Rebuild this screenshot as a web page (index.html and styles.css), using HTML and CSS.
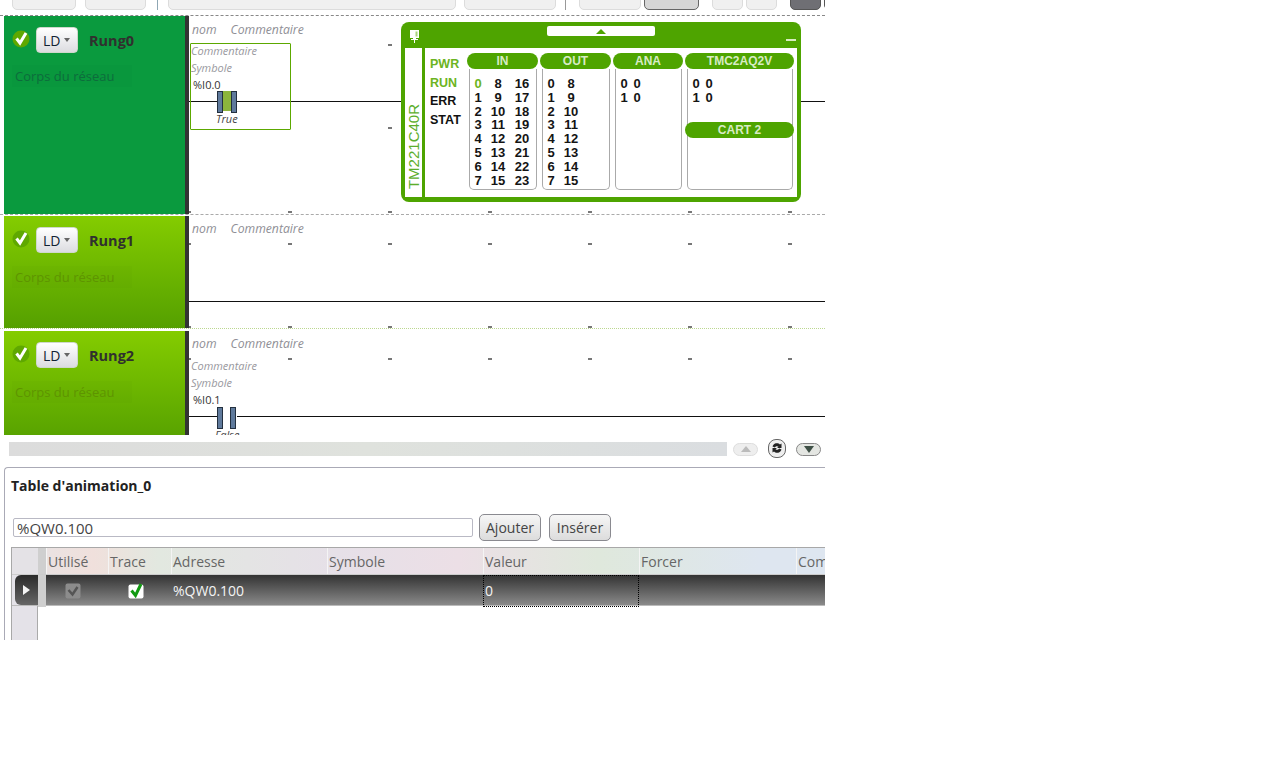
FILE: index.html
```html
<!DOCTYPE html>
<html lang="fr">
<head>
<meta charset="utf-8">
<title>Table d'animation</title>
<link rel="stylesheet" href="styles.css">
</head>
<body>
<div class="app">
  <div class="toolbar">
    <span class="tb tb1"></span><span class="tb tb2"></span><span class="tb-sep"></span><span class="tb tb3"></span><span class="tb tb4"></span><span class="tb-sep sep2"></span><span class="tb tb5"></span><span class="tb tb6"></span><span class="tb tb7"></span><span class="tb tb8"></span><span class="tb tb9"></span><span class="tb tb10"></span>
  </div>

  <div class="rungs">
    <section class="rung rung-active">
      <div class="rung-head">
        <div class="rung-title">
          <svg class="ok" viewBox="0 0 18 18"><circle cx="9" cy="9" r="8.5" fill="#5fa800"/><path d="M4.5 8.5l3.5 4.5 6-10" fill="none" stroke="#fff" stroke-width="3"/></svg>
          <span class="ld">LD<i class="caret"></i></span>
          <b class="name">Rung0</b>
        </div>
        <div class="body-label">Corps du réseau</div>
      </div>
      <div class="diagram">
        <div class="cols"><i>nom</i><i>Commentaire</i></div>
        <span class="wire wire0"></span>
        <span class="tick t-b0 x0"></span><span class="tick t-b0 x1"></span><span class="tick t-b0 x2"></span><span class="tick t-b0 x3"></span><span class="tick t-b0 x4"></span><span class="tick t-b0 x5"></span><span class="tick t-b0 x6"></span>
        <span class="tick t-t0 x2"></span><span class="tick t-m0 x2"></span>
        <div class="contact-box selected">
          <em>Commentaire</em><em>Symbole</em><span class="addr">%I0.0</span>
          <div class="contact on"><span></span></div>
          <em class="state">True</em>
        </div>

        <div class="module">
          <div class="mod-top">
            <svg class="pin" viewBox="0 0 12 14"><path d="M2 1h9v8H8v1h2v1H7v3H6v-3H3v-1h2V9H2z" fill="#fff"/><path d="M7.500 2.500H9.500V7.500H7.500z" fill="#a8d47c"/></svg>
            <span class="mod-pill"><i></i></span>
            <span class="mod-min"></span>
          </div>
          <div class="mod-main">
            <div class="mod-name"><span>TM221C40R</span></div>
            <div class="mod-panel">
              <div class="leds"><b class="lit">PWR</b><b class="lit">RUN</b><b>ERR</b><b>STAT</b></div>
              <div class="io">
                <h4>IN</h4>
                <div class="card">
                  <div class="nums n3">
                    <span class="lit">0</span><span>8</span><span>16</span>
                    <span>1</span><span>9</span><span>17</span>
                    <span>2</span><span>10</span><span>18</span>
                    <span>3</span><span>11</span><span>19</span>
                    <span>4</span><span>12</span><span>20</span>
                    <span>5</span><span>13</span><span>21</span>
                    <span>6</span><span>14</span><span>22</span>
                    <span>7</span><span>15</span><span>23</span>
                  </div>
                </div>
              </div>
              <div class="io">
                <h4>OUT</h4>
                <div class="card">
                  <div class="nums n2">
                    <span>0</span><span>8</span>
                    <span>1</span><span>9</span>
                    <span>2</span><span>10</span>
                    <span>3</span><span>11</span>
                    <span>4</span><span>12</span>
                    <span>5</span><span>13</span>
                    <span>6</span><span>14</span>
                    <span>7</span><span>15</span>
                  </div>
                </div>
              </div>
              <div class="io">
                <h4>ANA</h4>
                <div class="card">
                  <div class="nums pair"><span>0</span><span>0</span><span>1</span><span>0</span></div>
                </div>
              </div>
              <div class="io">
                <h4>TMC2AQ2V</h4>
                <div class="card">
                  <div class="nums pair"><span>0</span><span>0</span><span>1</span><span>0</span></div>
                  <h4 class="cart">CART 2</h4>
                </div>
              </div>
            </div>
          </div>
        </div>
      </div>
    </section>

    <section class="rung rung-1">
      <div class="rung-head">
        <div class="rung-title">
          <svg class="ok" viewBox="0 0 18 18"><circle cx="9" cy="9" r="8.5" fill="#5fa800"/><path d="M4.5 8.5l3.5 4.5 6-10" fill="none" stroke="#fff" stroke-width="3"/></svg>
          <span class="ld">LD<i class="caret"></i></span>
          <b class="name">Rung1</b>
        </div>
        <div class="body-label">Corps du réseau</div>
      </div>
      <div class="diagram">
        <div class="cols"><i>nom</i><i>Commentaire</i></div>
        <span class="wire wire1"></span>
        <span class="tick t-t x0"></span><span class="tick t-t x1"></span><span class="tick t-t x2"></span><span class="tick t-t x3"></span><span class="tick t-t x4"></span><span class="tick t-t x5"></span><span class="tick t-t x6"></span>
        <span class="tick t-b x0"></span><span class="tick t-b x1"></span><span class="tick t-b x2"></span><span class="tick t-b x3"></span><span class="tick t-b x4"></span><span class="tick t-b x5"></span><span class="tick t-b x6"></span>
      </div>
    </section>

    <section class="rung rung-2">
      <div class="rung-head">
        <div class="rung-title">
          <svg class="ok" viewBox="0 0 18 18"><circle cx="9" cy="9" r="8.5" fill="#5fa800"/><path d="M4.5 8.5l3.5 4.5 6-10" fill="none" stroke="#fff" stroke-width="3"/></svg>
          <span class="ld">LD<i class="caret"></i></span>
          <b class="name">Rung2</b>
        </div>
        <div class="body-label">Corps du réseau</div>
      </div>
      <div class="diagram">
        <div class="cols"><i>nom</i><i>Commentaire</i></div>
        <span class="wire wire1"></span>
        <span class="tick t-t x0"></span><span class="tick t-t x1"></span><span class="tick t-t x2"></span><span class="tick t-t x3"></span><span class="tick t-t x4"></span><span class="tick t-t x5"></span><span class="tick t-t x6"></span>
        <div class="contact-box">
          <em>Commentaire</em><em>Symbole</em><span class="addr">%I0.1</span>
          <div class="contact off"><span></span></div>
          <em class="state">False</em>
        </div>
      </div>
    </section>
  </div>

  <div class="scrollrow">
    <div class="scrolltrack"></div>
    <button class="pill-btn dim"><i class="tri-up"></i></button>
    <button class="gear-btn">
      <svg viewBox="0 0 14 14"><path d="M2.500 5.500a4.500 4.500 0 0 1 7.500-2l1.500-1v4.500H7l1.500-1.300A2.400 2.400 0 0 0 4.800 6.500z" fill="#222"/><path d="M11.500 8.500a4.500 4.500 0 0 1-7.500 2l-1.500 1V7H7L5.500 8.300A2.400 2.400 0 0 0 9.200 7.500z" fill="#222"/></svg>
    </button>
    <button class="pill-btn"><i class="tri-down"></i></button>
  </div>

  <section class="panel">
    <h2>Table d'animation_0</h2>
    <div class="addbar">
      <input class="addr-input" type="text" value="%QW0.100">
      <button class="act">Ajouter</button>
      <button class="act">Insérer</button>
    </div>
    <div class="grid">
      <div class="grid-head">
        <span class="corner"></span><span class="strip"></span>
        <span>Utilisé</span><span>Trace</span><span>Adresse</span><span>Symbole</span><span>Valeur</span><span>Forcer</span><span>Commentaire</span>
      </div>
      <div class="grid-row">
        <span class="row-mark"><i></i></span><span class="strip"></span>
        <span class="cell-c"><svg class="cb" viewBox="0 0 16 16"><rect x=".5" y=".5" width="15" height="15" rx="2" fill="#8c8c8c"/><path d="M3.500 7l4 4.500L12.500 4" fill="none" stroke="#555" stroke-width="2.500"/></svg></span>
        <span class="cell-c"><svg class="cb" viewBox="0 0 16 16"><rect x=".5" y="1.500" width="15" height="14" rx="2" fill="#fff"/><path d="M3.500 7.500l4 5L13 1" fill="none" stroke="#129a12" stroke-width="3"/></svg></span>
        <span>%QW0.100</span><span></span><span class="focus">0</span><span></span><span></span>
      </div>
      <div class="grid-empty"><span class="corner"></span></div>
    </div>
  </section>
</div>
</body>
</html>
```
FILE: styles.css
```css
* { box-sizing: border-box; }
html, body { margin: 0; padding: 0; background: #fff; }
body { font-family: "Open Sans", "Noto Sans", sans-serif; }
.app { width: 825px; height: 640px; overflow: hidden; display: flex; flex-direction: column; }

/* toolbar, cut by the window top */
.toolbar { height: 11px; flex: none; display: flex; align-items: flex-end; padding: 0 0 1px 12px; overflow: hidden; }
.tb { height: 20px; flex: none; border: 1px solid #dcdcdc; border-radius: 5px; background: #f0f0f0; }
.tb1 { width: 64px; }
.tb2 { width: 61px; margin-left: 9px; }
.tb-sep { width: 1px; height: 10px; flex: none; background: #8fa7b4; margin: 0 10px 0 11px; }
.tb3 { width: 288px; }
.tb4 { width: 92px; margin-left: 8px; }
.sep2 { margin: 0 13px 0 9px; background: #999; }
.tb5 { width: 62px; }
.tb6 { width: 55px; margin-left: 3px; background: #d6d6d6; border-color: #666; }
.tb7 { width: 31px; margin-left: 13px; }
.tb8 { width: 31px; margin-left: 3px; }
.tb9 { width: 31px; margin-left: 13px; background: #6f6f74; border-color: #555; }
.tb10 { width: 20px; margin-left: 3px; background: #5c5c60; border-color: #555; }

/* rungs */
.rungs { height: 420px; flex: none; margin-top: 4px; overflow: hidden; display: flex; flex-direction: column; }
.rung { flex: none; display: grid; grid-template-columns: 181px 4px 1fr; padding-left: 4px; }
.rung::before { content: ""; grid-column: 2; grid-row: 1; background: #333; }
.rung-active { height: 200px; margin-bottom: 1px; border-top: 1px dashed #888; border-bottom: 1px dashed #aaa; }
.rung-1 { height: 113px; margin-bottom: 2px; border-bottom: 1px dotted #bcd890; }
.rung-2 { height: 113px; }

.rung-head { grid-column: 1; grid-row: 1; padding: 11px 0 0 7px; background: linear-gradient(#84cc00, #55a000); }
.rung-active .rung-head { background: #0a9a3e; }
.rung-title { display: flex; align-items: center; height: 26px; }
.ok { width: 18px; height: 18px; flex: none; margin: -2px 6px 0 1px; }
.ld { width: 42px; height: 26px; display: flex; align-items: center; padding-left: 6px; border-radius: 4px; background: linear-gradient(#fff, #dcdce0); font-size: 14px; color: #123; border: 1px solid #cfd8cc; }
.caret { width: 0; height: 0; margin-left: 4px; border: 3.500px solid transparent; border-top: 4px solid #666; border-bottom: 0; }
.name { margin-left: 11px; font-size: 14.500px; color: #30302e; }
.body-label { width: 120px; height: 22px; margin-top: 13px; margin-left: 1px; padding-left: 3px; font-size: 13px; line-height: 22px; white-space: nowrap; background: rgba(0, 0, 0, .015); color: #5e9400; }
.rung-active .body-label { color: #0d6c3c; margin-top: 12px; }

.diagram { grid-column: 3; grid-row: 1; position: relative; min-width: 0; }
.cols { display: flex; gap: 14px; padding: 4px 0 0 3px; font-size: 12.200px; line-height: 17px; color: #8f8f96; }
.rung-active .cols { padding-top: 5px; }
.wire { position: absolute; left: 0; right: 0; top: 85px; height: 1px; background: #111; }
.tick { position: absolute; width: 4px; height: 2px; background: #777; }
.x0 { left: 0; width: 2px; }
.x1 { left: 99px; }
.x2 { left: 199px; }
.x3 { left: 299px; }
.x4 { left: 399px; }
.x5 { left: 499px; }
.x6 { left: 599px; }
.t-b0 { top: 195px; }
.t-t0 { top: 28px; }
.t-m0 { top: 111px; }
.t-t { top: 27px; }
.t-b { top: 110px; }

.contact-box { position: absolute; left: 1px; top: 28px; width: 101px; height: 87px; display: flex; flex-direction: column; font-size: 11px; color: #98989e; }
.contact-box.selected { border: 1.500px solid #5ca800; border-radius: 1px; top: 27px; }
.contact-box em { display: block; height: 17px; flex: none; line-height: 17px; padding-left: 1px; }
.contact-box.selected em { padding-left: 0; }
.contact-box em:first-child { margin-top: -2px; }
.addr { height: 17px; flex: none; line-height: 17px; color: #333; padding-left: 3px; }
.selected .addr { padding-left: 2px; }
.contact { position: relative; flex: none; left: 26px; width: 20px; height: 20px; margin-top: -2px; }
.contact span { position: absolute; inset: 0; }
.contact span::before, .contact span::after { content: ""; position: absolute; top: 0; width: 4px; height: 20px; background: #5f7a9c; border: 1px solid #23303f; }
.contact span::before { left: 0; }
.contact span::after { right: 0; }
.contact.on { background: #8cb53c; }
.contact.off { background: #fff; z-index: 1; left: 27px; margin-top: -1px; }
.contact.off span::after { right: 1px; }
.contact-box em.state { padding-left: 25px; color: #444; height: 16px; line-height: 16px; }

/* expert module overlay */
.module { position: absolute; left: 212px; top: 6px; width: 400px; height: 180px; z-index: 2; display: flex; flex-direction: column; padding: 0 4px 5px; background: #4ea400; border-radius: 8px; }
.mod-top { height: 26px; flex: none; position: relative; display: flex; justify-content: center; }
.pin { position: absolute; left: 3px; top: 7px; width: 12px; height: 14px; }
.mod-pill { width: 108px; height: 10px; margin-top: 4px; background: #fff; border-radius: 2px; display: flex; justify-content: center; align-items: center; }
.mod-pill i { border: 5px solid transparent; border-bottom: 5px solid #4ea400; border-top: 0; }
.mod-min { position: absolute; right: 1px; top: 17px; width: 10px; height: 2px; background: #d8ecc0; }
.mod-main { flex: 1; display: flex; gap: 3px; min-height: 0; }
.mod-name { width: 17px; background: #fff; display: flex; align-items: flex-end; justify-content: center; padding-bottom: 8px; }
.mod-name span { writing-mode: vertical-rl; transform: rotate(180deg); font: 15px/17px "Liberation Sans", Arial, sans-serif; color: #5cae2c; }
.mod-panel { flex: 1; background: #fff; display: grid; grid-template-columns: 40px 71px 71px 70px 109px; column-gap: 2px; padding-top: 5px; font-family: "Liberation Sans", Arial, sans-serif; }
.leds { display: flex; flex-direction: column; padding: 2px 0 0 5px; font-size: 12.500px; line-height: 18.600px; color: #111; }
.lit { color: #6cb422; }
.io { display: flex; flex-direction: column; min-width: 0; height: 137px; }
.io h4, .cart { margin: 0; height: 16px; flex: none; background: #4ea400; border-radius: 8px; color: #d8ecc4; font-size: 12px; line-height: 16px; text-align: center; }
.card { flex: 1; margin: 0 1.500px; padding: 8px 0 0 4.500px; border: 1px solid #aaa; border-top: 0; border-radius: 0 0 5px 5px; display: flex; flex-direction: column; }
.nums { display: grid; grid-auto-rows: 13.800px; font-size: 13px; font-weight: 700; line-height: 13.800px; text-align: center; color: #141414; }
.n3 { grid-template-columns: 8px 32px 16px; }
.n2 { grid-template-columns: 8px 32px; }
.pair { grid-template-columns: 8px 8px; column-gap: 5px; }
.io .cart { margin: 17px -2.500px 0 -7px; }

/* scroll row */
.scrollrow { height: 32px; flex: none; display: flex; align-items: center; padding: 0 0 8px 9px; }
.scrolltrack { width: 718px; height: 14px; background: linear-gradient(90deg, #dcdcdc, #dfe2dd 50%, #dadde0); margin-top: 4px; }
.pill-btn { width: 25px; height: 13px; padding: 0; display: flex; align-items: center; justify-content: center; border: 1px solid #888; border-radius: 7px; background: #e4e6e2; margin-top: 4px; }
.pill-btn.dim { margin-left: 6px; border-color: #ddd; background: #eee; }
.tri-up { border: 5px solid transparent; border-top: 0; border-bottom: 6px solid #bbb; }
.tri-down { border: 5.500px solid transparent; border-bottom: 0; border-top: 7px solid #3f5046; }
.gear-btn { width: 18px; height: 19px; padding: 0; margin: 2px 10px 0 10px; border: 1px solid #666; border-radius: 8px; background: #eee; display: flex; align-items: center; justify-content: center; }
.gear-btn svg { width: 14px; height: 14px; }

/* animation table */
.panel { flex: 1; margin-left: 4px; min-height: 0; padding: 0 0 0 6px; border: 1px solid #aaaab6; border-right: 0; border-bottom: 0; border-radius: 4px 0 0 0; }
.panel h2 { margin: 0; padding-top: 8px; height: 46px; font-size: 14px; line-height: 20px; font-weight: 700; color: #222; }
.addbar { display: flex; align-items: center; height: 27px; padding-left: 2px; }
.addr-input { width: 460px; height: 19px; padding: 0 3px; border: 1px solid #b9b9c4; border-radius: 2px; font: 15px/17px "Open Sans", sans-serif; color: #444; outline: 0; }
.act { height: 27px; margin-left: 6px; padding: 0 6px; width: 62px; border: 1px solid #8a8a90; border-radius: 5px; background: linear-gradient(#f6f6f6, #dcdcdc); font: 14px "Open Sans", sans-serif; color: #444; }
.act + .act { margin-left: 8px; }
.grid { margin-top: 6px; border-top: 1px solid #a8a8a8; border-left: 1px solid #a8a8a8; }
.grid-head, .grid-row { display: grid; grid-template-columns: 26px 8px 62px 63px 156px 156px 156px 157px 200px; }
.grid-head { height: 27px; font-size: 14px; line-height: 27px; color: #666; background: linear-gradient(90deg, #e6e4e6 0, #f0e0dc 10%, #e2e8e0 18%, #e6e0e8 40%, #ecdfe6 55%, #dfe8dc 72%, #dee6f0 92%); border-bottom: 1px solid #ccc; }
.grid-head > span { padding-left: 1px; border-left: 1px solid #f4f4f4; white-space: nowrap; overflow: hidden; }
.grid-head .corner { border-left: 0; background: #e4e2e6; }
.grid-head .strip, .grid-row .strip { border-left: 0; padding: 0; background: #cfcfcf; }
.grid-row { height: 31px; font-size: 14px; line-height: 32px; color: #f4f4f4; background: linear-gradient(#333, #8a8a8a); border-bottom: 1px solid #bbb; }
.grid-row > span { padding-left: 2px; white-space: nowrap; }
.grid-row > .row-mark { padding-left: 3px; background: #e4e2e8; display: flex; height: 30px; }
.row-mark i { flex: 1; display: flex; align-items: center; justify-content: center; border-radius: 6px 0 0 6px; background: linear-gradient(#2a2a2a, #666); }
.row-mark i::before { content: ""; border: 5.500px solid transparent; border-right: 0; border-left: 7px solid #f4f4f4; }
.grid-row > .cell-c { padding: 0 8px 0 0; display: flex; align-items: center; justify-content: center; }
.cb { width: 16px; height: 16px; }
.focus { outline: 1px dotted #000; outline-offset: -1px; }
.grid-empty { height: 40px; }
.grid-empty .corner { display: block; width: 26px; height: 40px; background: #e4e2e8; border-right: 1px solid #aaa; }
```
